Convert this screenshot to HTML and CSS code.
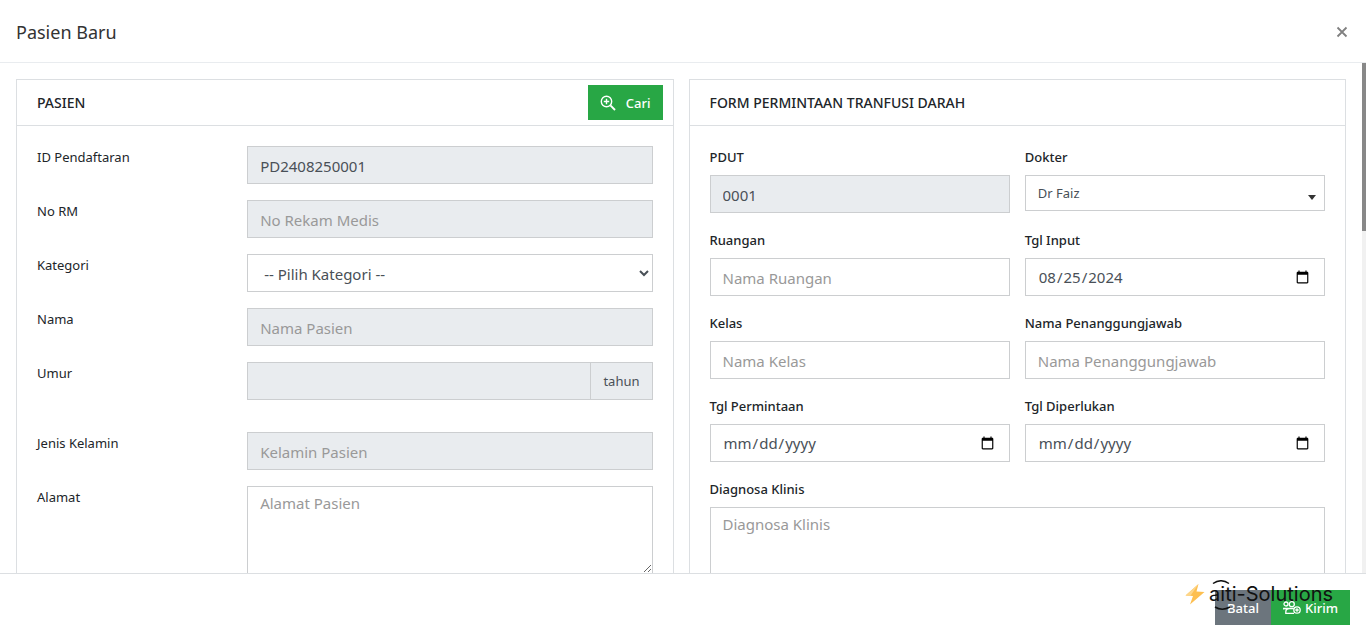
FILE: index.html
```html
<!DOCTYPE html>
<html lang="id">
<head>
<meta charset="utf-8">
<meta name="viewport" content="width=device-width, initial-scale=1">
<title>Pasien Baru</title>
<link rel="stylesheet" href="styles.css">
</head>
<body>
<div class="modal">
  <header class="modal-header">
    <h1 class="modal-title">Pasien Baru</h1>
    <button class="close" type="button" aria-label="Tutup">
      <svg width="12" height="12" viewBox="0 0 12 12" aria-hidden="true"><path d="M1.500 1.500l9 9M10.500 1.500l-9 9" stroke="#808080" stroke-width="1.800" fill="none"/></svg>
    </button>
  </header>

  <div class="modal-main">
    <main class="modal-body">
      <form class="panels" id="pasien-form">
        <section class="card">
          <div class="card-header">
            <h2 class="card-title">PASIEN</h2>
            <button class="btn btn-green btn-search" type="button">
              <svg width="16" height="16" viewBox="0 0 16 16" fill="none" stroke="#fff" stroke-width="1.4" aria-hidden="true"><circle cx="6.5" cy="6.5" r="5.2"/><path d="M6.5 3.8v5.4M3.8 6.5h5.4"/><path d="M10.4 10.4l4.6 4.6" stroke-width="1.9"/></svg>
              <span>Cari</span>
            </button>
          </div>
          <div class="card-body">
            <div class="row"><label for="id">ID Pendaftaran</label><input class="control" id="id" type="text" value="PD2408250001" readonly></div>
            <div class="row"><label for="rm">No RM</label><input class="control" id="rm" type="text" placeholder="No Rekam Medis" readonly></div>
            <div class="row"><label for="kategori">Kategori</label><select class="control" id="kategori"><option>-- Pilih Kategori --</option></select></div>
            <div class="row"><label for="nama">Nama</label><input class="control" id="nama" type="text" placeholder="Nama Pasien" readonly></div>
            <div class="row row-spaced"><label for="umur">Umur</label>
              <div class="group"><input class="control" id="umur" type="text" readonly><span class="addon">tahun</span></div>
            </div>
            <div class="row"><label for="kelamin">Jenis Kelamin</label><input class="control" id="kelamin" type="text" placeholder="Kelamin Pasien" readonly></div>
            <div class="row"><label for="alamat">Alamat</label><textarea class="control address" id="alamat" placeholder="Alamat Pasien"></textarea></div>
          </div>
        </section>

        <section class="card">
          <div class="card-header">
            <h2 class="card-title">FORM PERMINTAAN TRANFUSI DARAH</h2>
          </div>
          <div class="card-body fields">
            <div class="field"><label for="pdut">PDUT</label><input class="control" id="pdut" type="text" value="0001" readonly></div>
            <div class="field"><label for="dokter">Dokter</label>
              <div class="picker"><select class="control" id="dokter"><option>Dr Faiz</option></select></div>
            </div>
            <div class="field"><label for="ruangan">Ruangan</label><input class="control" id="ruangan" type="text" placeholder="Nama Ruangan"></div>
            <div class="field"><label for="tgl-input">Tgl Input</label><input class="control" id="tgl-input" type="date" value="2024-08-25"></div>
            <div class="field"><label for="kelas">Kelas</label><input class="control" id="kelas" type="text" placeholder="Nama Kelas"></div>
            <div class="field"><label for="pj">Nama Penanggungjawab</label><input class="control" id="pj" type="text" placeholder="Nama Penanggungjawab"></div>
            <div class="field"><label for="tgl-minta">Tgl Permintaan</label><input class="control" id="tgl-minta" type="date"></div>
            <div class="field"><label for="tgl-perlu">Tgl Diperlukan</label><input class="control" id="tgl-perlu" type="date"></div>
            <div class="field wide"><label for="diagnosa">Diagnosa Klinis</label><textarea class="control diagnosis" id="diagnosa" placeholder="Diagnosa Klinis"></textarea></div>
          </div>
        </section>
      </form>
    </main>
    <div class="rail" aria-hidden="true"><div class="rail-thumb"></div></div>
  </div>

  <footer class="modal-footer">
    <button class="btn btn-grey" type="button">Batal</button>
    <button class="btn btn-green" type="submit" form="pasien-form">
      <svg width="18" height="14" viewBox="0 0 18 14" fill="none" stroke="#fff" stroke-width="1.3" aria-hidden="true"><circle cx="3" cy="3" r="2"/><circle cx="8.8" cy="3.2" r="2.5"/><path d="M.7 8.500v-1h4.500M5.200 12.300H2.800V11c0-2.500 1.500-3.500 3.500-3.500h4.500M5 12.300h6"/><circle cx="14" cy="9" r="3.200"/><path d="M14 7.300v3.400M12.300 9h3.400"/></svg>
      <span>Kirim</span>
    </button>
    <div class="brand">
      <svg class="brand-bolt" width="20" height="22" viewBox="0 0 20 22" aria-hidden="true"><path d="M13.500 1L.5 12.500l7.500.5-3 8.500L19.500 9l-8-.5z" fill="#fdbf50"/><path d="M13.500 1L.5 12.500l5 .3z" fill="#fdd68a"/></svg>
      <span class="brand-name">aiti-Solutions</span>
      <svg class="brand-arcs" width="20" height="32" viewBox="0 0 20 32" fill="none" stroke="#111" stroke-width="1.500" aria-hidden="true"><path d="M1 3.500Q9-2 17 3.500M3 27q7 4.500 15 0"/></svg>
    </div>
  </footer>
</div>
</body>
</html>
```

FILE: styles.css
```css
* { box-sizing: border-box; }

body {
  margin: 0;
  font-family: "Noto Sans", "Open Sans", sans-serif;
  font-size: 13px;
  line-height: 23px;
  color: #212529;
  background: #fff;
}

h1, h2 { margin: 0; }

button, input, select, textarea { font-family: inherit; }

.modal {
  display: flex;
  flex-direction: column;
  height: 100vh;
}

.modal-header {
  display: flex;
  align-items: center;
  justify-content: space-between;
  padding: 17px 16px 15px;
  border-bottom: 1px solid #e9ecef;
}

.modal-title {
  font-size: 18px;
  font-weight: 400;
  line-height: 30px;
  color: #333;
}

.close {
  display: flex;
  padding: 2px;
  border: 0;
  background: none;
}

.modal-main {
  display: flex;
  flex: 1;
  min-height: 0;
}

.modal-body {
  flex: 1;
  overflow-y: auto;
  scrollbar-width: none;
  padding: 16px;
}

.rail {
  width: 4px;
  background: #f1f1f1;
}

.rail-thumb {
  height: 33%;
  background: #888;
}

.panels {
  display: grid;
  grid-template-columns: 1fr 1fr;
  gap: 15px;
  min-height: 1525px;
}

.card { border: 1px solid #dcdfe2; }

.card-header {
  display: flex;
  align-items: center;
  justify-content: space-between;
  min-height: 46px;
  padding: 5px 10px 5px 20px;
  border-bottom: 1px solid #dcdfe2;
}

.card-title {
  font-size: 14px;
  font-weight: 500;
}

.card-body { padding: 20px; }

.row {
  display: grid;
  grid-template-columns: 13fr 27fr;
  align-items: start;
  gap: 15px;
  margin-bottom: 16px;
}

.row-spaced { margin-bottom: 32px; }

.fields {
  display: grid;
  grid-template-columns: 1fr 1fr;
  align-content: start;
  gap: 16px 15px;
}

.field {
  display: flex;
  flex-direction: column;
  gap: 6px;
}

.field label { font-weight: 500; }

.wide { grid-column: 1 / -1; }

.control {
  display: block;
  width: 100%;
  height: 38px;
  padding: 7px 12px 5px;
  border: 1px solid #ccced0;
  border-radius: 0;
  background: #fff;
  font-size: 15px;
  line-height: 24px;
  color: #495057;
}

.control::placeholder { color: #999; }

.control:read-only:not(select) { background: #e9ecef; }

.control[type="date"] {
  padding: 6px 12px;
  background: #fff;
}

.group { display: flex; }

.addon {
  display: flex;
  align-items: center;
  padding: 0 12px;
  border: 1px solid #ccced0;
  border-left: 0;
  background: #e9ecef;
  color: #495057;
}

.picker { position: relative; }

.picker .control {
  height: 36px;
  padding: 5px 12px 7px;
  appearance: none;
  font-size: 13px;
}

.picker::after {
  content: "";
  position: absolute;
  top: 20px;
  right: 9px;
  border: 4px solid transparent;
  border-top: 5px solid #333;
  border-bottom: 0;
}

.control.address { height: 88px; }

.control.diagnosis { height: 110px; }

textarea.control { padding: 4px 12px; }

.btn {
  display: flex;
  align-items: center;
  gap: 4px;
  height: 35px;
  padding: 0 12px;
  border: 0;
  font-size: 13px;
  font-weight: 500;
  color: #fff;
}

.btn-green { background: #28a745; }
.btn-grey { background: #6c757d; }
.btn-search { gap: 10px; }

.modal-footer {
  position: relative;
  display: flex;
  justify-content: flex-end;
  padding: 16px 16px 15px;
  border-top: 1px solid #dcdfe2;
}

.brand {
  position: absolute;
  top: 6px;
  right: 33px;
  display: flex;
  align-items: center;
  gap: 4px;
  pointer-events: none;
}

.brand-name {
  font-family: Inter, sans-serif;
  font-size: 20px;
  line-height: 28px;
  color: #111;
}

.brand-arcs {
  position: absolute;
  top: 0;
  left: 27px;
}
```
